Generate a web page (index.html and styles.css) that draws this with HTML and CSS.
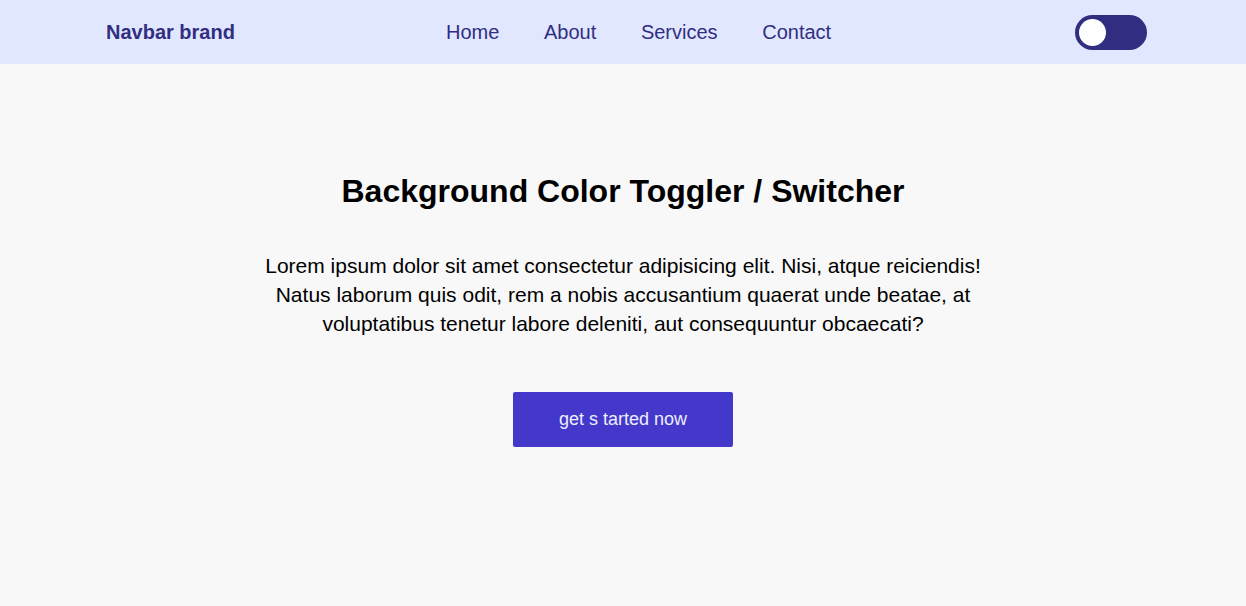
FILE: index.html
```html
<!DOCTYPE html>
<html lang="en">
<head>
<meta charset="utf-8">
<title>Background Color Toggler</title>
<link rel="stylesheet" href="styles.css">
</head>
<body>
<nav class="navbar">
  <a class="brand" href="#">Navbar brand</a>
  <ul class="links">
    <li><a href="#">Home</a></li>
    <li><a href="#">About</a></li>
    <li><a href="#">Services</a></li>
    <li><a href="#">Contact</a></li>
  </ul>
  <button class="toggle" aria-label="Toggle background"><span class="knob"></span></button>
</nav>
<main class="hero">
  <h1 class="title">Background Color Toggler / Switcher</h1>
  <p class="text">Lorem ipsum dolor sit amet consectetur adipisicing elit. Nisi, atque reiciendis! Natus laborum quis odit, rem a nobis accusantium quaerat unde beatae, at voluptatibus tenetur labore deleniti, aut consequuntur obcaecati?</p>
  <button class="cta">get s tarted now</button>
</main>
</body>
</html>
```
FILE: styles.css
```css
* { box-sizing: border-box; }
html, body { margin: 0; padding: 0; }
body {
  background: #f8f8f8;
  font-family: "Liberation Sans", Arial, sans-serif;
  color: #000;
}
.navbar {
  height: 64px;
  background: #e0e7ff;
  display: flex;
  align-items: center;
  padding: 0 99px 0 106px;
}
.brand {
  font-size: 20px;
  font-weight: 700;
  color: #312e81;
  text-decoration: none;
}
.links {
  list-style: none;
  margin: 0 0 0 211px;
  padding: 0;
  display: flex;
  gap: 44.67px;
}
.links a {
  font-size: 20px;
  color: #312e81;
  text-decoration: none;
}
.toggle {
  margin-left: auto;
  width: 72px;
  height: 35px;
  border: none;
  border-radius: 18px;
  background: #312e81;
  padding: 0 0 0 4px;
  display: flex;
  align-items: center;
}
.knob {
  width: 27px;
  height: 27px;
  border-radius: 50%;
  background: #fff;
}
.hero {
  display: flex;
  flex-direction: column;
  align-items: center;
  text-align: center;
  padding-top: 109px;
}
.title {
  margin: 0;
  font-size: 32px;
  line-height: 37px;
  font-weight: 700;
}
.text {
  margin: 41px 0 0;
  width: 740px;
  font-size: 21px;
  line-height: 29px;
}
.cta {
  margin-top: 54px;
  width: 220px;
  height: 55px;
  border: none;
  border-radius: 2px;
  background: #4338ca;
  color: #eef;
  font-family: "Liberation Sans", Arial, sans-serif;
  font-size: 18px;
}
```
